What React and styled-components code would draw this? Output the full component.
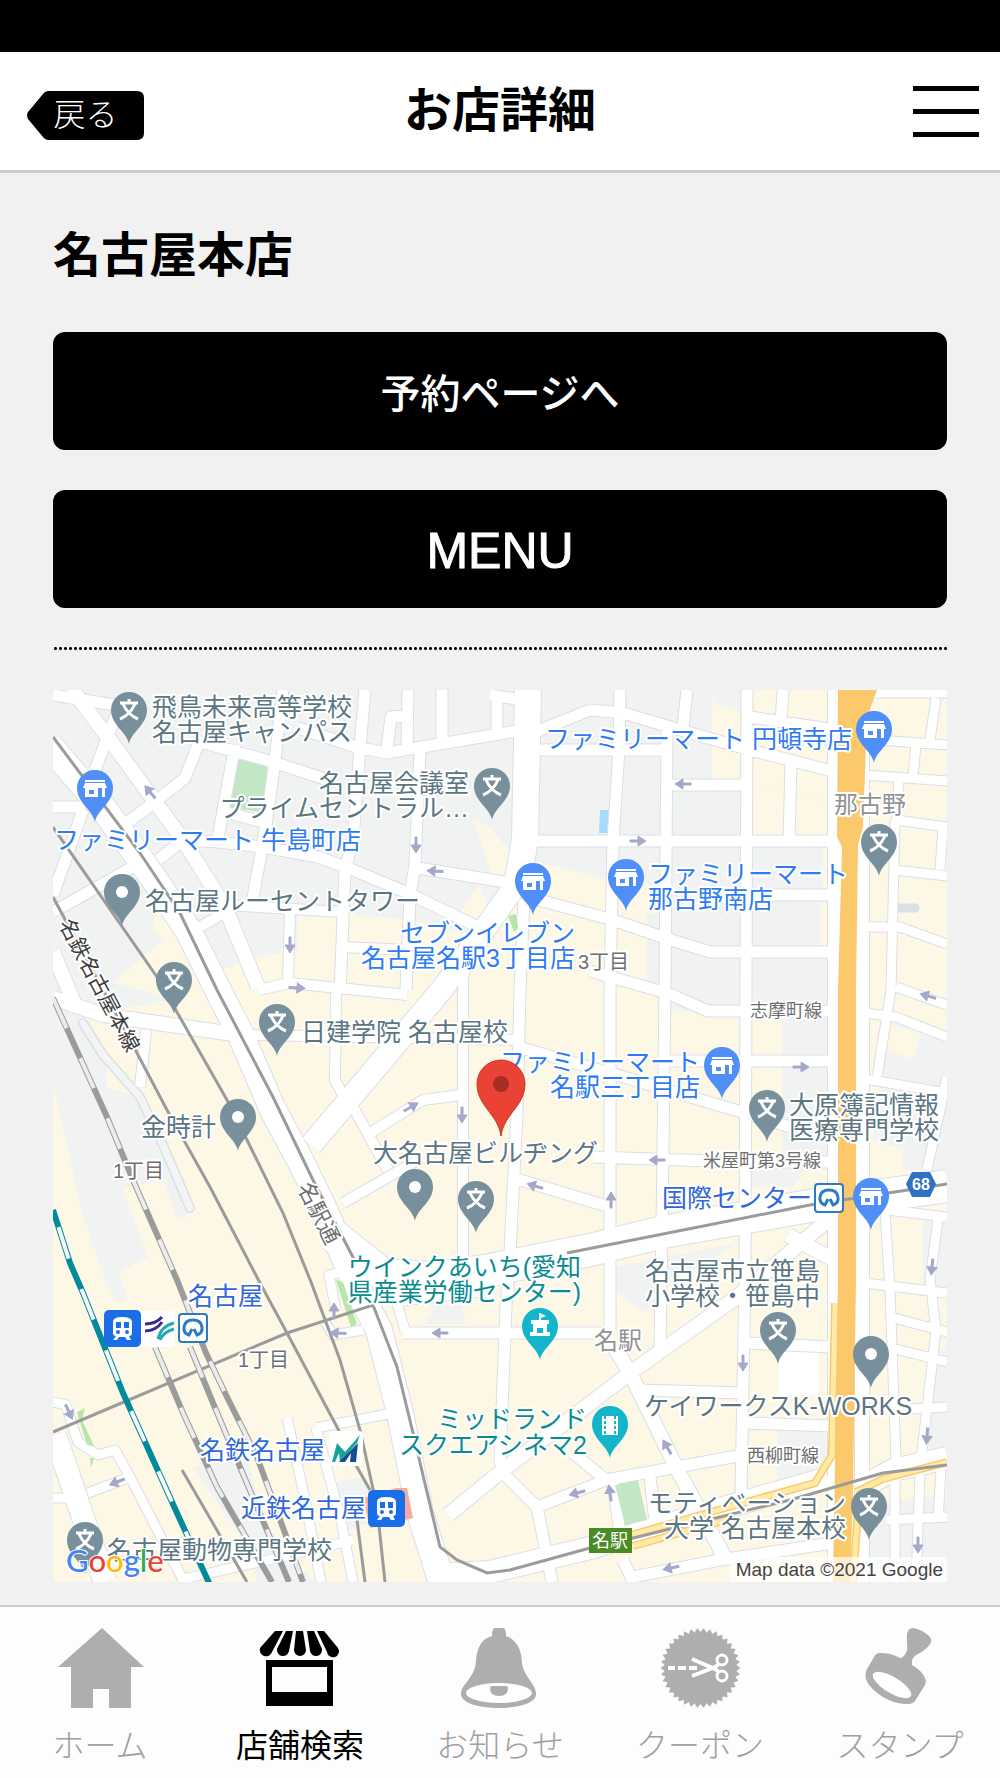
import React from 'react'
import styled, { createGlobalStyle } from 'styled-components'

const GRAY = '#78909c'
const BLUE = '#4f8ff7'
const TEAL = '#12b5cb'
const TEXT_GRAY = '#5b7682'
const TEXT_BLUE = '#2e7cf0'
const TEXT_STATION = '#2f68d8'
const TEXT_TEAL = '#0a8c8f'
const TEXT_ROAD = '#6f6f6f'
const TEXT_AREA = '#929292'

// shades of land that are not the cream default
const grayLand = [
    'M0,0H659V90H700V60L779,82V33H739V0H660V12L689,22V0H779V112L700,95V157H779V300H777V477L754,477L740,497H697V477H729V321H617V203L607,197L554,190L487,172H465L437,137L421,130L440,190L463,190L435,215L426,195L405,225L420,245L354,230L280,222L245,217V260L200,268L168,280L180,300L60,320L0,310Z',
    'M0,300L37,333L54,363V397L87,407L137,523L125,530L110,490L69,498L95,567L65,583L75,608L64,613L52,590L29,523L0,393Z',
    'M594,223H607V293H594Z',
    'M834,330L894,345V483L850,480V460L820,450V430L830,390Z',
    'M140,777L193,767L217,850L262,892H205L190,850Z',
    'M277,793L310,787L330,830L287,842Z',
    'M560,577L684,553L640,580L600,590V616L590,622L560,600Z',
    'M725,740H773V787L724,797Z',
    'M817,815L894,805V892H817Z',
    'M382,615H410L412,634H372Z',
    'M870,530H894V600H870Z',
    'M882,660H894V760H876Z',
]

const creamLand = [
    'M659,12L689,22V90H659Z',
    'M739,0H779V33L739,26Z',
    'M700,65L779,85V112L700,95Z',
    'M770,112H779V146H770Z',
    'M770,157H779V200H770Z',
    'M767,212H779V258H767Z',
    'M102,222L112,224L160,300L180,345H150L120,310L60,292L110,250L100,238Z',
    'M834,334L868,344L860,370L834,360Z',
]

const roads = [
    { w: 11, d: ['M0,5L55,14L78,16', 'M65,20L42,80', 'M0,117H32', 'M75,132L102,112L132,88L147,50', 'M30,120L0,205', 'M0,222L87,173', 'M105,170L130,150L165,152L210,157L265,167L300,180L357,204L425,237',
        'M140,50L220,72L275,90', 'M230,0L222,70L213,135L200,208', 'M182,55L165,148', 'M172,122L213,133', 'M245,38L303,57L333,63L470,40', 'M312,0L307,57L300,150L292,180L287,302',
        'M355,0L354,57', 'M367,60L362,175L357,205L353,300', 'M389,0V50', 'M334,60L338,27L354,25', 'M444,8V42', 'M437,5L470,10', 'M365,178L465,194'] },
    { w: 10, d: ['M145,238L173,222', 'M173,215L290,222', 'M237,220L235,292', 'M290,257L355,260', 'M205,300L237,293L354,305', 'M283,300L282,390L290,405', 'M300,417L335,480', 'M317,443L370,410L408,405',
        'M290,513L370,467', 'M412,276L410,290V567', 'M93,340L87,397', 'M200,345L465,350'] },
    { w: 11, d: ['M487,60H612', 'M475,45L537,20L570,23L617,37L697,60L737,70L782,82', 'M697,27L782,40', 'M465,151H784', 'M567,0L566,60L560,150L557,300V640', 'M614,37L612,300L609,540L607,660',
        'M634,0L630,37', 'M694,0L692,590L688,803', 'M617,95H692', 'M738,73L736,150', 'M730,0L728,32', 'M697,205H784', 'M475,207L560,230L612,248L657,262H784', 'M537,281L614,303L655,321H784',
        'M465,357L557,383L692,423L737,437', 'M612,371H784', 'M457,487L557,517', 'M540,467L690,472H784'] },
    { w: 11, d: ['M471,210L467,300L464,423L457,563L453,617L447,770L450,783L484,817L492,857L499,892', 'M350,643H553', 'M583,700L690,703', 'M695,653L779,657', 'M693,733L779,736', 'M484,817L553,790L690,765',
        'M520,763L553,790', 'M560,790L567,845', 'M597,787L603,840', 'M570,870L580,892', 'M580,887L667,870L779,853'] },
    { w: 14, d: ['M395,825L450,780L577,683L684,607L775,530', 'M560,655L577,683L623,777L672,868', 'M0,308L50,325L187,345', 'M18,-2L62,57L130,150L172,217L205,297', 'M782,0V892', 'M809,0V892', 'M0,262L24,320', 'M735,545L790,575'] },
    { w: 9, d: ['M820,3H894', 'M883,8L877,50', 'M825,50L894,55', 'M863,55L860,87', 'M812,85L894,91', 'M846,90L843,135', 'M843,130L894,137', 'M890,137L887,180', 'M843,180L894,186', 'M812,237H847L894,254',
        'M842,130L838,300L824,387', 'M843,297L894,315', 'M812,323L843,327L894,347', 'M807,388L894,403', 'M894,387L874,480', 'M834,520L894,527', 'M832,520L837,600L843,770', 'M885,530L877,590L883,640L868,770',
        'M812,593L894,603', 'M837,627L894,642', 'M834,657L894,672', 'M840,720L894,717', 'M842,785V892', 'M867,785L863,892', 'M888,780L885,830', 'M834,830L894,827'] },
    { w: 9, d: ['M0,712L13,715L25,752L45,765L62,760L77,787L130,890', 'M0,808H20', 'M35,803L77,787', 'M125,890L215,870L300,850', 'M234,728L250,800L268,892', 'M263,738L340,723', 'M263,738L288,830L300,892',
        'M283,620L276,585L295,580', 'M272,632L280,645L310,640', 'M340,600L352,640'] },
    { w: 22, d: ['M2,745L52,892', 'M470,185L390,298L258,455', 'M384,885L437,882L537,858L670,818L775,788', 'M804,800L840,780L894,768'] },
    { w: 26, d: ['M-4,55L50,118L95,180L135,240L170,310L187,343L220,420L247,470L270,517L287,557L305,600L326,640L347,723L367,823L388,890', 'M475,0L472,150L464,195'] },
    { w: 32, d: ['M280,545L330,585L380,588L437,580L537,560L610,542L773,513L894,496', 'M345,600L430,590'] },
]

const grayRails = [
    'M0,47L87,163L127,223L164,300L220,407L260,490L303,573',
    'M0,137L104,287L174,410L194,450L230,523L258,592L287,670L307,740L324,817L332,892',
    'M0,207L84,363L114,420L157,497L207,593L234,643L284,737L304,777L317,800',
    'M129,780L194,892',
    'M304,830L312,892',
    'M0,742L234,643L320,615L344,677L360,743L387,857L404,870L434,883L457,880L537,858L580,848L737,810L830,783L894,775',
    'M514,563L757,515L894,494',
]

const stripedRails = [
    'M0,308L54,427L80,490L124,590L153,663L174,707L204,767L250,892',
    'M137,657L160,713L187,777L236,892',
    'M102,657L130,723L164,797L219,892',
]

const tealRail = 'M0,520L17,573L30,603L70,703L124,823L157,895'

const arrows = [
    [97, 102, 230], [363, 155, 90], [382, 181, 184], [237, 255, 90], [244, 298, 4], [630, 94, 180], [585, 151, 0],
    [358, 417, -30], [409, 425, 90], [604, 470, 180], [482, 496, 196], [558, 510, 270], [748, 377, 0], [875, 306, 196],
    [879, 577, 96], [387, 643, 180], [285, 643, 184], [281, 621, 270], [16, 722, 65], [64, 792, 158], [690, 673, 90],
    [614, 757, 240], [524, 803, 165], [557, 803, 262], [618, 878, 168], [865, 855, 90], [874, 746, 94],
]

const pins = [
    { x: 76, y: 2, kind: 'school' },
    { x: 439, y: 78, kind: 'school' },
    { x: 121, y: 272, kind: 'school' },
    { x: 826, y: 134, kind: 'school' },
    { x: 224, y: 314, kind: 'school' },
    { x: 714, y: 400, kind: 'school' },
    { x: 423, y: 491, kind: 'school' },
    { x: 725, y: 622, kind: 'school' },
    { x: 816, y: 798, kind: 'school' },
    { x: 32, y: 832, kind: 'school' },
    { x: 69, y: 184, kind: 'place' },
    { x: 185, y: 409, kind: 'place' },
    { x: 362, y: 479, kind: 'place' },
    { x: 818, y: 646, kind: 'place' },
    { x: 42, y: 80, kind: 'shop' },
    { x: 821, y: 21, kind: 'shop' },
    { x: 480, y: 173, kind: 'shop' },
    { x: 573, y: 169, kind: 'shop' },
    { x: 669, y: 357, kind: 'shop' },
    { x: 818, y: 488, kind: 'shop' },
    { x: 487, y: 618, kind: 'hall' },
    { x: 557, y: 716, kind: 'cinema' },
]

const labels = [
    { x: 99, y: 26, t: '飛鳥未来高等学校' },
    { x: 99, y: 51, t: '名古屋キャンパス' },
    { x: 416, y: 102, t: '名古屋会議室', end: true },
    { x: 416, y: 127, t: 'プライムセントラル…', end: true },
    { x: 92, y: 220, t: '名古屋ルーセントタワー' },
    { x: 248, y: 351, t: '日建学院 名古屋校' },
    { x: 88, y: 446, t: '金時計' },
    { x: 320, y: 472, t: '大名古屋ビルヂング' },
    { x: 736, y: 424, t: '大原簿記情報' },
    { x: 736, y: 449, t: '医療専門学校' },
    { x: 592, y: 590, t: '名古屋市立笹島' },
    { x: 592, y: 615, t: '小学校・笹島中' },
    { x: 591, y: 725, t: 'ケイワークスK-WORKS' },
    { x: 793, y: 822, t: 'モティベーション', end: true },
    { x: 793, y: 847, t: '大学 名古屋本校', end: true },
    { x: 54, y: 869, t: '名古屋動物専門学校' },
    { x: 1, y: 159, t: 'ファミリーマート 牛島町店', c: TEXT_BLUE },
    { x: 799, y: 58, t: 'ファミリーマート 円頓寺店', c: TEXT_BLUE, end: true },
    { x: 522, y: 252, t: 'セブンイレブン', c: TEXT_BLUE, end: true },
    { x: 522, y: 277, t: '名古屋名駅3丁目店', c: TEXT_BLUE, end: true },
    { x: 595, y: 193, t: 'ファミリーマート', c: TEXT_BLUE },
    { x: 595, y: 218, t: '那古野南店', c: TEXT_BLUE },
    { x: 647, y: 381, t: 'ファミリーマート', c: TEXT_BLUE, end: true },
    { x: 647, y: 406, t: '名駅三丁目店', c: TEXT_BLUE, end: true },
    { x: 609, y: 517, t: '国際センター', c: TEXT_STATION },
    { x: 135, y: 615, t: '名古屋', c: TEXT_STATION },
    { x: 147, y: 769, t: '名鉄名古屋', c: TEXT_STATION },
    { x: 188, y: 827, t: '近鉄名古屋', c: TEXT_STATION },
    { x: 528, y: 586, t: 'ウインクあいち(愛知', c: TEXT_TEAL, end: true },
    { x: 528, y: 611, t: '県産業労働センター)', c: TEXT_TEAL, end: true },
    { x: 534, y: 738, t: 'ミッドランド', c: TEXT_TEAL, end: true },
    { x: 534, y: 764, t: 'スクエアシネマ2', c: TEXT_TEAL, end: true },
    { x: 781, y: 123, t: '那古野', c: TEXT_AREA, s: 24 },
    { x: 541, y: 659, t: '名駅', c: TEXT_AREA, s: 24 },
    { x: 525, y: 279, t: '3丁目', c: TEXT_ROAD, s: 20 },
    { x: 60, y: 488, t: '1丁目', c: TEXT_ROAD, s: 20 },
    { x: 185, y: 677, t: '1丁目', c: TEXT_ROAD, s: 20 },
    { x: 697, y: 327, t: '志摩町線', c: TEXT_ROAD, s: 18 },
    { x: 650, y: 477, t: '米屋町第3号線', c: TEXT_ROAD, s: 18 },
    { x: 694, y: 772, t: '西柳町線', c: TEXT_ROAD, s: 18 },
]

const pinColors = { school: GRAY, place: GRAY, shop: BLUE, hall: TEAL, cinema: TEAL }

function Pin({ x, y, kind }) {
    const color = pinColors[kind]
    return (
        <g transform={`translate(${x} ${y})`}>
            <path d="M0,52C-2,40 -18,33 -18,18A18,18 0 0 1 18,18C18,33 2,40 0,52Z" fill={color} />
            {kind === 'place' && <circle cy="18" r="6" fill="#fff" />}
            {kind === 'school' && (
                <path d="M-9,11H9M0,7V11M-6,12Q-1,23 9,27M6,12Q1,23 -9,27" fill="none" stroke="#fff" strokeWidth="3" />
            )}
            {kind === 'shop' && (
                <g fill="#fff">
                    <path d="M-10,10H10V12H-10ZM-10,13H10L12,18H-12Z" />
                    <path fillRule="evenodd" d="M-10,18H3V27H-10ZM-6,20V24H-1V20ZM7,18H10V27H7Z" />
                </g>
            )}
            {kind === 'hall' && (
                <path fillRule="evenodd" d="M0,5L6,8L1,10V12H9V16H7V24H10V28H-10V24H-7V16H-9V12H-1V5ZM-3,20V25H3V20Z" fill="#fff" />
            )}
            {kind === 'cinema' && (
                <g>
                    <rect x="-8" y="10" width="16" height="19" fill="#fff" />
                    <path d="M-5,10V29M5,10V29" stroke={color} strokeWidth="2" strokeDasharray="3 2" />
                </g>
            )}
        </g>
    )
}

function TrainBadge({ x, y }) {
    return (
        <g transform={`translate(${x} ${y})`}>
            <rect width="37" height="37" rx="5" fill="#1a6fe8" />
            <path fillRule="evenodd" d="M9,12Q9,7 18,7Q28,7 28,12V23Q28,26 25,26L27,30H23L21,27H15L13,30H9L12,26Q9,26 9,23ZM12,12V18H17V12ZM20,12V18H25V12ZM12,22A2,2 0 0 0 16,22A2,2 0 0 0 12,22ZM21,22A2,2 0 0 0 25,22A2,2 0 0 0 21,22Z" fill="#fff" />
        </g>
    )
}

function SubwayBadge({ x, y }) {
    return (
        <g transform={`translate(${x} ${y})`}>
            <rect x="1" y="1" width="28" height="28" rx="3" fill="#fff" stroke="#2c7ac0" strokeWidth="2" />
            <path d="M14,16L11,22Q5,20 6,14Q7,7 15,7Q23,7 24,14Q25,20 19,22L16,16" fill="none" stroke="#2c7ac0" strokeWidth="3" />
        </g>
    )
}

function StoreMap() {
    return (
        <MapSvg viewBox="0 0 894 892" role="img" aria-label="名古屋本店の地図">
            <rect width="894" height="892" fill="#fdf8e6" />
            <path d={grayLand.join('')} fill="#f1f3f3" />
            <path d={creamLand.join('')} fill="#fdf8e6" />
            <path d="M185,67L216,77L209,122L177,118Z" fill="#c3e6c5" />
            <path d="M547,120H556L554,143H546Z" fill="#a8dafc" />
            <path d="M726,662H765V705H726Z" fill="#fff" />

            <g fill="none" strokeLinejoin="round">
                <path d="M30,333L50,365L87,407L110,455L137,518" stroke="#dcdfe4" strokeWidth="10" strokeLinecap="round" />
                <path d="M30,333L50,365L87,407L110,455L137,518" stroke="#f3f4f5" strokeWidth="7" strokeLinecap="round" />
                <path d="M845,218H862" stroke="#dcdfe4" strokeWidth="9" strokeLinecap="round" />
                {roads.map((road, i) => <path key={i} d={road.d.join('')} stroke="#dcdee6" strokeWidth={road.w + 2} />)}
                {roads.map((road, i) => <path key={i} d={road.d.join('')} stroke="#fff" strokeWidth={road.w} />)}
            </g>

            <path d="M562,795L585,790L594,830L572,835Z" fill="#c3e6c5" />
            <path d="M24,722L32,718L29,730L41,756L34,755ZM37,768H41L38,778ZM283,590L290,592L304,634L298,637ZM455,226L463,224L465,238L461,242Z" fill="#b6e6a8" />
            <path d="M310,808L343,798H354L360,828L317,838Z" fill="#f9a99f" />

            <path d="M785,0H824L814,27L810,137L805,155L803,300V590L800,797L797,892H780L785,590V300L789,157L784,147Z" fill="#fbc96c" />
            <g fill="none">
                <path d="M782,613L779,765L762,793L665,820L575,846M580,856L680,828M803,802L830,789L894,772M805,820L800,892" stroke="#fbc96c" strokeWidth="8" />
                <path d="M782,613L779,765L762,793L665,820L575,846M580,856L680,828M803,802L830,789L894,772M805,820L800,892" stroke="#ffeaa6" strokeWidth="5" />
            </g>

            <g fill="none">
                <path d={grayRails.join('')} stroke="#9b9b9b" strokeWidth="3" />
                <path d={stripedRails.join('')} stroke="#9b9b9b" strokeWidth="6" />
                <path d={stripedRails.join('')} stroke="#ececec" strokeWidth="4" strokeDasharray="33 33" />
                <path d={tealRail} stroke="#008a9b" strokeWidth="6" />
                <path d={tealRail} stroke="#f2fafa" strokeWidth="4" strokeDasharray="33 33" strokeDashoffset="48" />
            </g>

            {arrows.map(([x, y, r]) => (
                <path key={`${x}-${y}`} transform={`translate(${x} ${y}) rotate(${r})`} d="M-8,-1H0V-5L8,0L0,5V1H-8Z" fill="#a5a8c8" stroke="#a5a8c8" strokeWidth="1" />
            ))}

            {pins.map(pin => <Pin key={`${pin.x}-${pin.y}`} {...pin} />)}

            <rect x="88" y="621" width="34" height="36" rx="4" fill="#fff" />
            <path d="M92,634Q103,634 109,627M92,641Q103,641 109,632" fill="none" stroke="#3b2c8c" strokeWidth="3" />
            <path d="M105,649Q108,636 121,633M107,650Q110,642 121,639" fill="none" stroke="#27a9b5" strokeWidth="3" />
            <TrainBadge x="51" y="620" />
            <SubwayBadge x="125" y="623" />
            <TrainBadge x="315" y="800" />
            <SubwayBadge x="761" y="493" />
            <rect x="276" y="741" width="34" height="35" rx="4" fill="#fff" />
            <path d="M279,772L284,753L292,762L307,745L304,753L287,772L286,763L282,772Z" fill="#18a398" />
            <path d="M286,772L305,753L303,772H297L298,763L292,772Z" fill="#174a94" />
            <path d="M853,494L859,482H877L883,494L877,507H859Z" fill="#2f72c4" />
            <MapText x="868" y="500" $size={16} $color="#fff" $bold $plain textAnchor="middle">68</MapText>

            {labels.map(l => (
                <MapText key={`${l.x}-${l.y}`} x={l.x} y={l.y} $size={l.s || 25} $color={l.c || TEXT_GRAY} textAnchor={l.end ? 'end' : 'start'}>
                    {l.t}
                </MapText>
            ))}
            <MapText transform="translate(47 295) rotate(62)" y="8" $size={21} $color="#3c3c3c" textAnchor="middle">名鉄名古屋本線</MapText>
            <MapText transform="translate(266 523) rotate(63)" y="8" $size={22} $color={TEXT_ROAD} textAnchor="middle">名駅通</MapText>

            <rect x="536" y="838" width="43" height="25" fill="#4a8c23" />
            <MapText x="557" y="857" $size={18} $color="#fff" $plain textAnchor="middle">名駅</MapText>

            <path d="M448,446C445,424 424,416 424,394A24,24 0 0 1 472,394C472,416 451,424 448,446Z" fill="#ea4335" stroke="#c5392d" strokeWidth="1" />
            <circle cx="448" cy="394" r="8" fill="#a52f25" />

            <GoogleText x="13" y="882">
                <tspan fill="#4285f4">G</tspan>
                <tspan fill="#ea4335">o</tspan>
                <tspan fill="#fbbc05">o</tspan>
                <tspan fill="#4285f4">g</tspan>
                <tspan fill="#34a853">l</tspan>
                <tspan fill="#ea4335">e</tspan>
            </GoogleText>
            <rect x="677" y="867" width="217" height="25" fill="#fff" fillOpacity="0.7" />
            <Credit x="890" y="886" textAnchor="end">Map data ©2021 Google</Credit>
        </MapSvg>
    )
}

function HomeIcon() {
    return (
        <TabIcon viewBox="0 0 90 80" aria-hidden="true">
            <path d="M47,0L89,39H76V80H54V61H38V80H16V39H3Z" />
        </TabIcon>
    )
}

function StoreIcon() {
    return (
        <TabIcon viewBox="0 0 90 80" aria-hidden="true">
            <path d="M20,3H28L17,24A6,6 0 1 1 5,20ZM31,3H38L34,23A6,6 0 1 1 22,21ZM41,3H48L51,22A6,6 0 1 1 39,22ZM52,3H59L67,21A6,6 0 1 1 55,23ZM62,3H69L83,20A6,6 0 1 1 72,24Z" />
            <path fillRule="evenodd" d="M11,32H78V78H11ZM17,39V64H72V39Z" />
        </TabIcon>
    )
}

function BellIcon() {
    return (
        <TabIcon viewBox="0 0 90 80" aria-hidden="true">
            <path d="M37,8Q37,0 40,0H48Q51,0 51,8C64,13 67,26 67,36C70,50 81,56 81,66C81,75 64,80 44,80C24,80 6,75 6,66C6,56 20,50 21,33C22,20 26,11 37,8Z" />
            <ellipse cx="44" cy="65" rx="33" ry="10" fill="#fff" />
            <path d="M35,60Q35,58 37,58H51Q53,58 53,60Q53,68 44,68Q35,68 35,60Z" />
        </TabIcon>
    )
}

function CouponIcon() {
    const teeth = Array.from({ length: 76 }, (_, i) => {
        const r = i % 2 ? 36 : 40
        const a = (i * Math.PI) / 38
        return `${45.5 + r * Math.cos(a)},${40 + r * Math.sin(a)}`
    }).join(' ')
    return (
        <TabIcon viewBox="0 0 90 80" aria-hidden="true">
            <polygon points={teeth} />
            <g fill="none" stroke="#fff">
                <path d="M13,40H20M23,40H31M34,40H42" strokeWidth="4" />
                <path d="M37,31L60,41L64,44M37,48L60,39L64,36" strokeWidth="4" />
                <circle cx="67" cy="32" r="5" strokeWidth="3" />
                <circle cx="67" cy="48" r="5" strokeWidth="3" />
            </g>
        </TabIcon>
    )
}

function StampIcon() {
    return (
        <TabIcon viewBox="0 0 90 80" aria-hidden="true">
            <path d="M58,0Q53,0 52,6C51,14 54,20 51,25Q48,30 45,30C38,26 32,25 25,25Q21,25 19,29L12,41Q8,49 14,57C24,69 38,76 53,76Q58,76 60,73L70,57Q72,53 69,48C66,43 62,40 57,37Q56,33 58,30C62,25 70,24 75,16Q78,12 74,8Q68,2 58,0Z" />
            <ellipse cx="37" cy="57" rx="22" ry="8" transform="rotate(31 37 57)" fill="#fff" />
        </TabIcon>
    )
}

const tabs = [
    { label: 'ホーム', Icon: HomeIcon },
    { label: '店舗検索', Icon: StoreIcon, active: true },
    { label: 'お知らせ', Icon: BellIcon },
    { label: 'クーポン', Icon: CouponIcon },
    { label: 'スタンプ', Icon: StampIcon },
]

function App() {
    return (
        <>
            <GlobalStyle />
            <Page>
                <StatusBar />
                <Header>
                    <BackButton type="button">
                        <svg width="117" height="49" viewBox="0 0 117 49" aria-hidden="true">
                            <path d="M22,0H110Q117,0 117,7V42Q117,49 110,49H22Q18,49 16,46L1,28Q-1,24 1,21L16,3Q18,0 22,0Z" />
                        </svg>
                        <span>戻る</span>
                    </BackButton>
                    <Title>お店詳細</Title>
                    <MenuButton type="button" aria-label="メニュー">
                        <i />
                        <i />
                        <i />
                    </MenuButton>
                </Header>
                <Content>
                    <StoreName>名古屋本店</StoreName>
                    <Actions>
                        <ActionButton type="button">予約ページへ</ActionButton>
                        <ActionButton type="button" $latin>MENU</ActionButton>
                    </Actions>
                    <Divider />
                    <StoreMap />
                </Content>
                <TabBar>
                    {tabs.map(({ label, Icon, active }) => (
                        <Tab key={label} href="#" $active={active}>
                            <Icon />
                            <span>{label}</span>
                        </Tab>
                    ))}
                </TabBar>
            </Page>
        </>
    )
}

export default App

const GlobalStyle = createGlobalStyle`
*{
    box-sizing:border-box;
}
body{
    margin:0;
    background:#f1f1f1;
    color:#000;
    font-family:"Liberation Sans", "Noto Sans CJK JP", sans-serif;
}
button{
    border:none;
    padding:0;
    color:inherit;
    font-family:inherit;
    cursor:pointer;
}
`

const Page = styled.div`
min-height:100vh;
display:flex;
flex-direction:column;
`

const StatusBar = styled.div`
height:52px;
background:#000;
`

const Header = styled.header`
height:121px;
padding:0 21px;
display:grid;
grid-template-columns:1fr auto 1fr;
align-items:center;
background:#fff;
border-bottom:3px solid #ccc;
`

const BackButton = styled.button`
justify-self:start;
margin:8px 0 0 6px;
display:grid;
align-items:center;
background:none;
color:#fff;
font-size:32px;
line-height:48px;

svg, span{
    grid-area:1 / 1;
}
svg{
    display:block;
    fill:#000;
}
span{
    font-weight:300;
}
`

const Title = styled.h1`
margin:0;
font-size:48px;
line-height:64px;
font-weight:700;
`

const MenuButton = styled.button`
justify-self:end;
width:66px;
display:flex;
flex-direction:column;
gap:18px;
background:none;

i{
    height:5px;
    background:#000;
}
`

const Content = styled.main`
flex:1;
padding:51px 53px 22px;
`

const StoreName = styled.h2`
margin:0;
font-size:48px;
line-height:64px;
font-weight:700;
`

const Actions = styled.div`
margin-top:44px;
display:flex;
flex-direction:column;
gap:40px;
`

const ActionButton = styled.button`
height:118px;
padding-top:${({ $latin }) => ($latin ? 4 : 0)}px;
border-radius:12px;
background:#000;
color:#fff;
font-size:${({ $latin }) => ($latin ? 50 : 40)}px;
font-weight:500;
-webkit-text-stroke:${({ $latin }) => ($latin ? 1 : 0)}px #fff;
`

const Divider = styled.hr`
height:3px;
margin:39px 0 40px;
border:none;
background:radial-gradient(circle, #000 1px, transparent 2px) 0 0 / 5px 3px;
`

const MapSvg = styled.svg`
display:block;
width:100%;
height:auto;
`

const MapText = styled.text`
font-family:"Liberation Sans", "Noto Sans CJK JP", sans-serif;
font-size:${({ $size }) => $size}px;
font-weight:${({ $bold }) => ($bold ? 700 : 400)};
fill:${({ $color }) => $color};
stroke:#fff;
stroke-width:${({ $plain }) => ($plain ? 0 : 4)}px;
stroke-linejoin:round;
paint-order:stroke;
`

const GoogleText = styled.text`
font-family:Lato, sans-serif;
font-size:31px;
font-weight:500;
stroke:#fff;
stroke-width:2px;
paint-order:stroke;
`

const Credit = styled.text`
font-family:"Liberation Sans", sans-serif;
font-size:19px;
fill:#444;
`

const TabBar = styled.nav`
display:grid;
grid-template-columns:repeat(5, 1fr);
padding:21px 0 12px;
background:#fdfdfd;
border-top:2px solid #ccc;
`

const TabIcon = styled.svg`
display:block;
width:90px;
height:80px;
fill:currentColor;
`

const Tab = styled.a`
display:flex;
flex-direction:column;
align-items:center;
gap:18px;
color:${({ $active }) => ($active ? '#000' : '#aeaeae')};
text-decoration:none;
font-size:32px;
line-height:40px;

span{
    color:${({ $active }) => ($active ? '#000' : '#a0a0a0')};
    font-weight:${({ $active }) => ($active ? 400 : 300)};
}
`
